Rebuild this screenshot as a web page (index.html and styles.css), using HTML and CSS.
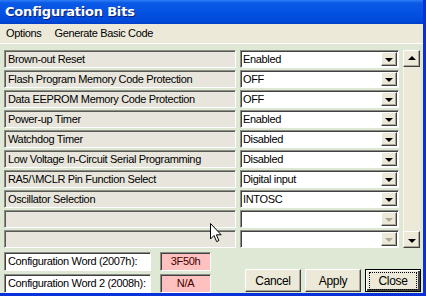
FILE: index.html
```html
<!DOCTYPE html>
<html lang="en">
<head>
  <meta charset="UTF-8" />
  <title>Configuration Bits</title>
  <link rel="stylesheet" href="styles.css">
</head>
<body>
  <div class="window">
    <div class="titlebar">Configuration Bits</div>

    <div class="menubar">
      <span class="menu-item">Options</span>
      <span class="menu-item">Generate Basic Code</span>
    </div>

    <div class="content">
      <div class="table-area">
        <div class="rows">
          <div class="row"><div class="label">Brown-out Reset</div><div class="combo"><span class="value">Enabled</span><span class="drop"><i class="tri"></i></span></div></div>
          <div class="row"><div class="label">Flash Program Memory Code Protection</div><div class="combo"><span class="value">OFF</span><span class="drop"><i class="tri"></i></span></div></div>
          <div class="row"><div class="label">Data EEPROM Memory Code Protection</div><div class="combo"><span class="value">OFF</span><span class="drop"><i class="tri"></i></span></div></div>
          <div class="row"><div class="label">Power-up Timer</div><div class="combo"><span class="value">Enabled</span><span class="drop"><i class="tri"></i></span></div></div>
          <div class="row"><div class="label">Watchdog Timer</div><div class="combo"><span class="value">Disabled</span><span class="drop"><i class="tri"></i></span></div></div>
          <div class="row"><div class="label">Low Voltage In-Circuit Serial Programming</div><div class="combo"><span class="value">Disabled</span><span class="drop"><i class="tri"></i></span></div></div>
          <div class="row"><div class="label">RA5/<span class="bs">&#92;</span>MCLR Pin Function Select</div><div class="combo"><span class="value">Digital input</span><span class="drop"><i class="tri"></i></span></div></div>
          <div class="row"><div class="label">Oscillator Selection</div><div class="combo"><span class="value">INTOSC</span><span class="drop"><i class="tri"></i></span></div></div>
          <div class="row"><div class="label"></div><div class="combo"><span class="value"></span><span class="drop disabled"><i class="tri"></i></span></div></div>
          <div class="row"><div class="label"></div><div class="combo"><span class="value"></span><span class="drop disabled"><i class="tri"></i></span></div></div>
        </div>

        <div class="scrollbar">
          <span class="sbtn"><i class="tri up"></i></span>
          <span class="track"></span>
          <span class="sbtn"><i class="tri"></i></span>
        </div>
      </div>

      <div class="footer">
        <div class="words">
          <div class="word"><span class="word-label">Configuration Word (2007h):</span><span class="word-value">3F50h</span></div>
          <div class="word"><span class="word-label">Configuration Word 2 (2008h):</span><span class="word-value">N/A</span></div>
        </div>
        <div class="buttons">
          <button class="btn">Cancel</button>
          <button class="btn">Apply</button>
          <button class="btn default"><span class="focus">Close</span></button>
        </div>
      </div>
    </div>
  </div>

  <!-- mouse pointer -->
  <svg class="cursor" width="13" height="20" viewBox="0 0 13 20">
    <path d="M0.5 0.5 L0.5 16 L4 12.5 L6.6 18.6 L8.9 17.6 L6.4 11.8 L11.2 11.8 Z" fill="#fff" stroke="#000" stroke-width="1"/>
  </svg>
</body>
</html>
```

FILE: styles.css
```css
html, body {
  margin: 0; padding: 0;
  width: 426px; height: 296px;
  overflow: hidden;
  font-family: "Liberation Sans", Arial, sans-serif;
  font-size: 11px;
  letter-spacing: -0.35px;
  color: #000;
}
.window {
  width: 423px; height: 293px;
  border-right: 3px solid #0831d9;
  border-bottom: 3px solid #0831d9;
  display: flex;
  flex-direction: column;
  background: #dfe7d5;
}
.titlebar {
  height: 25px;
  box-sizing: border-box;
  padding: 4px 0 0 5px;
  background: linear-gradient(#2f7cf4 0, #0a5ae6 3px, #0452e2 12px, #0048d8 22px, #0038b8 25px);
  color: #fff;
  font-weight: bold;
  font-size: 13px;
  font-family: "DejaVu Sans", sans-serif;
  letter-spacing: -0.2px;
  text-shadow: 1px 1px 0 #0a1e7a;
}
.menubar {
  height: 20px;
  box-sizing: border-box;
  background: #ece9d8;
  border-bottom: 1px solid #fff;
  display: flex;
  gap: 13px;
  padding: 3px 0 0 6px;
}
.content {
  flex: 1;
  padding: 6px 3px 0 4px;
}
.table-area {
  display: flex;
  gap: 4px;
}
.rows {
  display: flex;
  flex-direction: column;
  gap: 2px;
}
.row {
  display: flex;
  gap: 4px;
  height: 18px;
}
.label {
  width: 232px;
  box-sizing: border-box;
  background: #e8e6dc;
  border: 1px solid;
  border-color: #8d8c86 #fff #fff #8d8c86;
  box-shadow: inset 1px 1px 0 #5a5a55;
  padding: 2px 0 0 3px;
  white-space: nowrap;
}
.bs {
  margin: 0 0.5px 0 1px;
}
.combo {
  width: 159px;
  box-sizing: border-box;
  background: #fff;
  border: 1px solid;
  border-color: #8d8c86 #fff #fff #8d8c86;
  box-shadow: inset 1px 1px 0 #404040;
  display: flex;
  justify-content: space-between;
  padding: 1px 1px 1px 2px;
}
.value {
  padding-top: 1px;
}
.drop, .sbtn {
  width: 16px;
  box-sizing: border-box;
  background: #ece9d8;
  border: 1px solid;
  border-color: #fff #404040 #404040 #fff;
  box-shadow: inset -1px -1px 0 #aca899;
  display: flex;
  align-items: center;
  justify-content: center;
}
.tri {
  width: 0; height: 0;
  border-left: 4px solid transparent;
  border-right: 4px solid transparent;
  border-top: 4px solid #000;
  margin-top: 2px;
}
.tri.up {
  border-top: none;
  border-bottom: 4px solid #000;
  margin-top: -1px;
}
.drop.disabled .tri {
  border-top-color: #aca899;
}
.scrollbar {
  width: 17px;
  display: flex;
  flex-direction: column;
  background: #f0eee4;
}
.sbtn {
  width: 17px;
  height: 17px;
}
.track {
  flex: 1;
  background: #ece9d8;
  border-left: 1px solid #f6f5ee;
}
.footer {
  display: flex;
  justify-content: space-between;
  padding-top: 4px;
}
.words {
  display: flex;
  flex-direction: column;
  gap: 3px;
}
.word {
  display: flex;
  gap: 9px;
  height: 19px;
}
.word-label, .word-value {
  box-sizing: border-box;
  border: 1px solid;
  border-color: #8d8c86 #fff #fff #8d8c86;
  box-shadow: inset 1px 1px 0 #404040;
  padding: 2px 0 0 3px;
  white-space: nowrap;
}
.word-label {
  width: 147px;
  background: #fff;
}
.word-value {
  width: 51px;
  background: #ffc0c0;
  text-align: center;
  padding-left: 0;
  color: #400000;
}
.buttons {
  display: flex;
  gap: 4px;
  align-items: flex-end;
  padding-bottom: 1px;
  margin-right: -1px;
}
.btn {
  width: 56px;
  height: 23px;
  font: inherit;
  letter-spacing: inherit;
  font-size: 12px;
  background: #ece9d8;
  border: 1px solid;
  border-color: #fff #404040 #404040 #fff;
  box-shadow: inset -1px -1px 0 #aca899;
  padding: 0;
}
.btn.default {
  border: 1px solid #000;
  box-shadow: inset 1px 1px 0 #fff, inset -2px -2px 0 #404040;
}
.focus {
  display: inline-block;
  border: 1px dotted #000;
  padding: 1px 9px;
}
.cursor {
  position: absolute;
  left: 210px;
  top: 223px;
}
```
